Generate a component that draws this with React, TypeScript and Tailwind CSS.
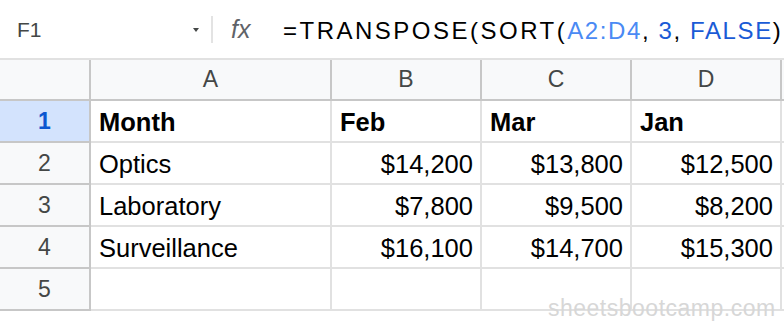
import React from 'react';

type Row = {
  num: number;
  cells: string[];
  bold?: boolean;
};

const columns = ['A', 'B', 'C', 'D'];

const rows: Row[] = [
  { num: 1, cells: ['Month', 'Feb', 'Mar', 'Jan'], bold: true },
  { num: 2, cells: ['Optics', '$14,200', '$13,800', '$12,500'] },
  { num: 3, cells: ['Laboratory', '$7,800', '$9,500', '$8,200'] },
  { num: 4, cells: ['Surveillance', '$16,100', '$14,700', '$15,300'] },
  { num: 5, cells: ['', '', '', ''] },
];

const App: React.FC = () => {
  return (
    <div className="relative w-[784px] h-[326px] overflow-hidden bg-white font-[family-name:'Liberation_Sans',Arial,sans-serif]">
      {/* formula bar */}
      <div className="flex items-center h-[60px] border-b-2 border-[#e1e1e1]">
        <div className="flex shrink-0 items-center w-[211px] pl-[17px] pr-[12px] pt-[2px]">
          <span className="text-[21px] text-[#444746]">F1</span>
          <span className="ml-auto w-0 h-0 border-l-[3px] border-r-[3px] border-t-[4px] border-l-transparent border-r-transparent border-t-[#444746]" />
        </div>
        <div className="shrink-0 w-[2px] h-[27px] bg-[#e3e3e3]" />
        <span className="shrink-0 ml-[18px] w-[52px] pt-[2px] text-[25px] italic text-[#5f6368]">fx</span>
        <span className="shrink-0 pt-[3px] text-[24px] text-black whitespace-nowrap">
          <span className="tracking-[2.5px]">=TRANSPOSE(SORT(</span>
          <span className="tracking-[1.6px]">
            <span className="text-[#4a8af4]">A2:D4</span>, <span className="text-[#1a5bd6]">3</span>,{' '}
            <span className="text-[#1a5bd6]">FALSE</span>)
          </span>
        </span>
      </div>

      {/* grid */}
      <div className="grid grid-cols-[91px_241px_150px_150px_150px_1fr]">
        <div className="h-[41px] bg-[#f8f9fa] border-r-2 border-b-2 border-[#c7c7c7]" />
        {columns.map((c) => (
          <div
            key={c}
            className="h-[41px] flex items-center justify-center bg-[#f8f9fa] border-r-2 border-b-2 border-[#c7c7c7] text-[23px] text-[#444746]"
          >
            {c}
          </div>
        ))}
        <div className="h-[41px] bg-[#f8f9fa] border-b-2 border-[#c7c7c7]" />

        {rows.map((r) => (
          <React.Fragment key={r.num}>
            <div
              className={`h-[42px] flex items-center justify-center border-r-2 border-b-2 border-[#c7c7c7] text-[23px] ${
                r.num === 1 ? 'bg-[#d3e3fd] text-[#0b57d0] font-bold' : 'bg-[#f8f9fa] text-[#444746]'
              }`}
            >
              {r.num}
            </div>
            {r.cells.map((v, i) => (
              <div
                key={i}
                className={`h-[42px] flex items-center pt-[2px] border-r-2 border-b-2 border-[#e1e1e1] text-[25.5px] text-black whitespace-nowrap ${
                  r.bold ? 'font-bold' : ''
                } ${i === 0 || r.bold ? 'justify-start pl-[8px]' : 'justify-end pr-[7px]'}`}
              >
                {v}
              </div>
            ))}
            <div className="h-[42px] border-b-2 border-[#e1e1e1]" />
          </React.Fragment>
        ))}
      </div>

      {/* watermark */}
      <div className="absolute left-[548px] top-[297px] text-[23px] tracking-[0.5px] leading-none text-[#d7d7d7] whitespace-nowrap">
        sheetsbootcamp.com
      </div>
    </div>
  );
};

export default App;
